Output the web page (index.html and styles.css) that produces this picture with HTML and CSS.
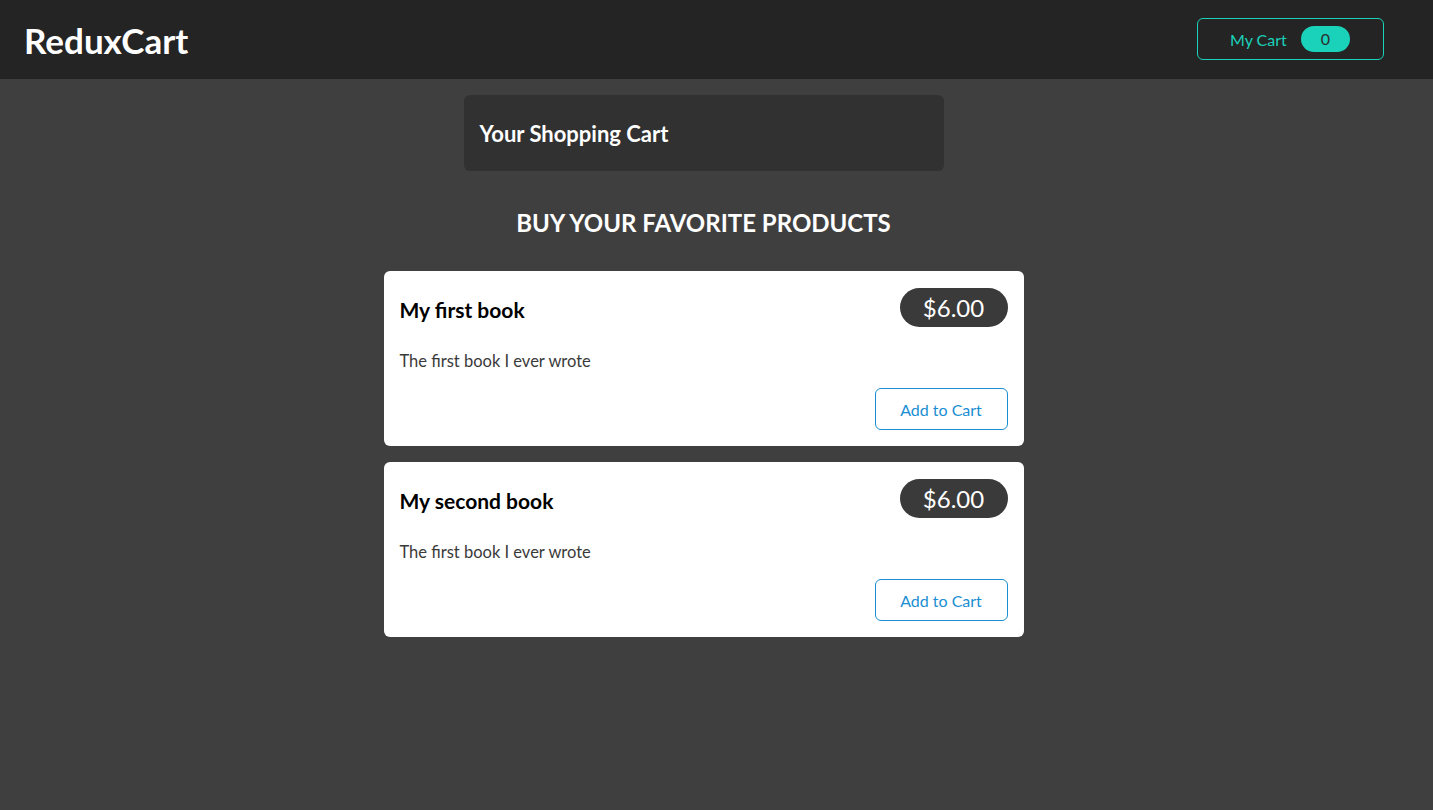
FILE: index.html
```html
<!DOCTYPE html>
<html lang="en">
<head>
<meta charset="utf-8">
<title>ReduxCart</title>
<link rel="stylesheet" href="styles.css">
</head>
<body>
<header class="topbar">
  <h1 class="logo">ReduxCart</h1>
  <button class="cart-button"><span>My Cart</span><span class="badge">0</span></button>
</header>
<main class="content">
  <section class="cart">
    <h2 class="cart-title">Your Shopping Cart</h2>
  </section>
  <section class="products">
    <h2 class="products-title">Buy your favorite products</h2>
    <ul class="product-list">
      <li class="item">
        <div class="item-head">
          <h3 class="item-title">My first book</h3>
          <div class="price">$6.00</div>
        </div>
        <p class="item-desc">The first book I ever wrote</p>
        <div class="actions"><button class="add-btn">Add to Cart</button></div>
      </li>
      <li class="item">
        <div class="item-head">
          <h3 class="item-title">My second book</h3>
          <div class="price">$6.00</div>
        </div>
        <p class="item-desc">The first book I ever wrote</p>
        <div class="actions"><button class="add-btn">Add to Cart</button></div>
      </li>
    </ul>
  </section>
</main>
</body>
</html>
```
FILE: styles.css
```css
* { box-sizing: border-box; }
body {
  margin: 0;
  background: #3f3f3f;
  font-family: "Lato", "Open Sans", sans-serif;
}
.topbar {
  height: 79px;
  background: #252424;
  display: flex;
  justify-content: space-between;
  align-items: center;
  padding: 0 49px 0 24px;
}
.logo {
  margin: 0;
  color: #fff;
  font-size: 35px;
  font-weight: 700;
}
.cart-button {
  display: flex;
  align-items: center;
  white-space: nowrap;
  height: 42px;
  width: 187px;
  padding: 0 0 0 32px;
  background: transparent;
  border: 1px solid #1ad1b9;
  border-radius: 6px;
  color: #1ad1b9;
  font-family: inherit;
  font-size: 16px;
  margin-top: -1px;
}
.badge {
  margin-left: 14px;
  background: #1ad1b9;
  color: #2d2d2d;
  border-radius: 30px;
  height: 26px;
  line-height: 26px;
  width: 49px;
  text-align: center;
}
.content {
  padding-right: 26px;
}
.cart {
  width: 480px;
  height: 76px;
  margin: 16px auto 0;
  background: #313131;
  border-radius: 6px;
  padding: 0 16px;
  display: flex;
  align-items: center;
}
.cart-title {
  margin: 0;
  color: #fff;
  font-size: 22px;
  font-weight: 700;
}
.products {
  width: 640px;
  margin: 0 auto;
}
.products-title {
  margin: 38px 0 34px;
  height: 28px;
  line-height: 28px;
  text-align: center;
  text-transform: uppercase;
  color: #fff;
  font-size: 24px;
  font-weight: 700;
}
.product-list {
  list-style: none;
  margin: 0;
  padding: 0;
}
.item {
  background: #fff;
  border-radius: 6px;
  padding: 17px 16px 16px;
  margin-bottom: 16px;
}
.item-head {
  display: flex;
  justify-content: space-between;
  align-items: center;
  height: 39px;
}
.item-title {
  margin: 3px 0 0;
  font-size: 21px;
  font-weight: 700;
  color: #000;
}
.price {
  height: 39px;
  line-height: 39px;
  width: 108px;
  text-align: center;
  background: #3a3a3a;
  color: #fff;
  border-radius: 30px;
  font-size: 24px;
  font-weight: 400;
}
.item-desc {
  margin: 24px 0 17px;
  line-height: 20px;
  font-size: 16.5px;
  color: #3a3a3a;
}
.actions {
  display: flex;
  justify-content: flex-end;
}
.add-btn {
  width: 133px;
  height: 42px;
  background: transparent;
  border: 1px solid #1a8ed1;
  border-radius: 6px;
  color: #1a8ed1;
  font-family: inherit;
  font-size: 16px;
}
```
